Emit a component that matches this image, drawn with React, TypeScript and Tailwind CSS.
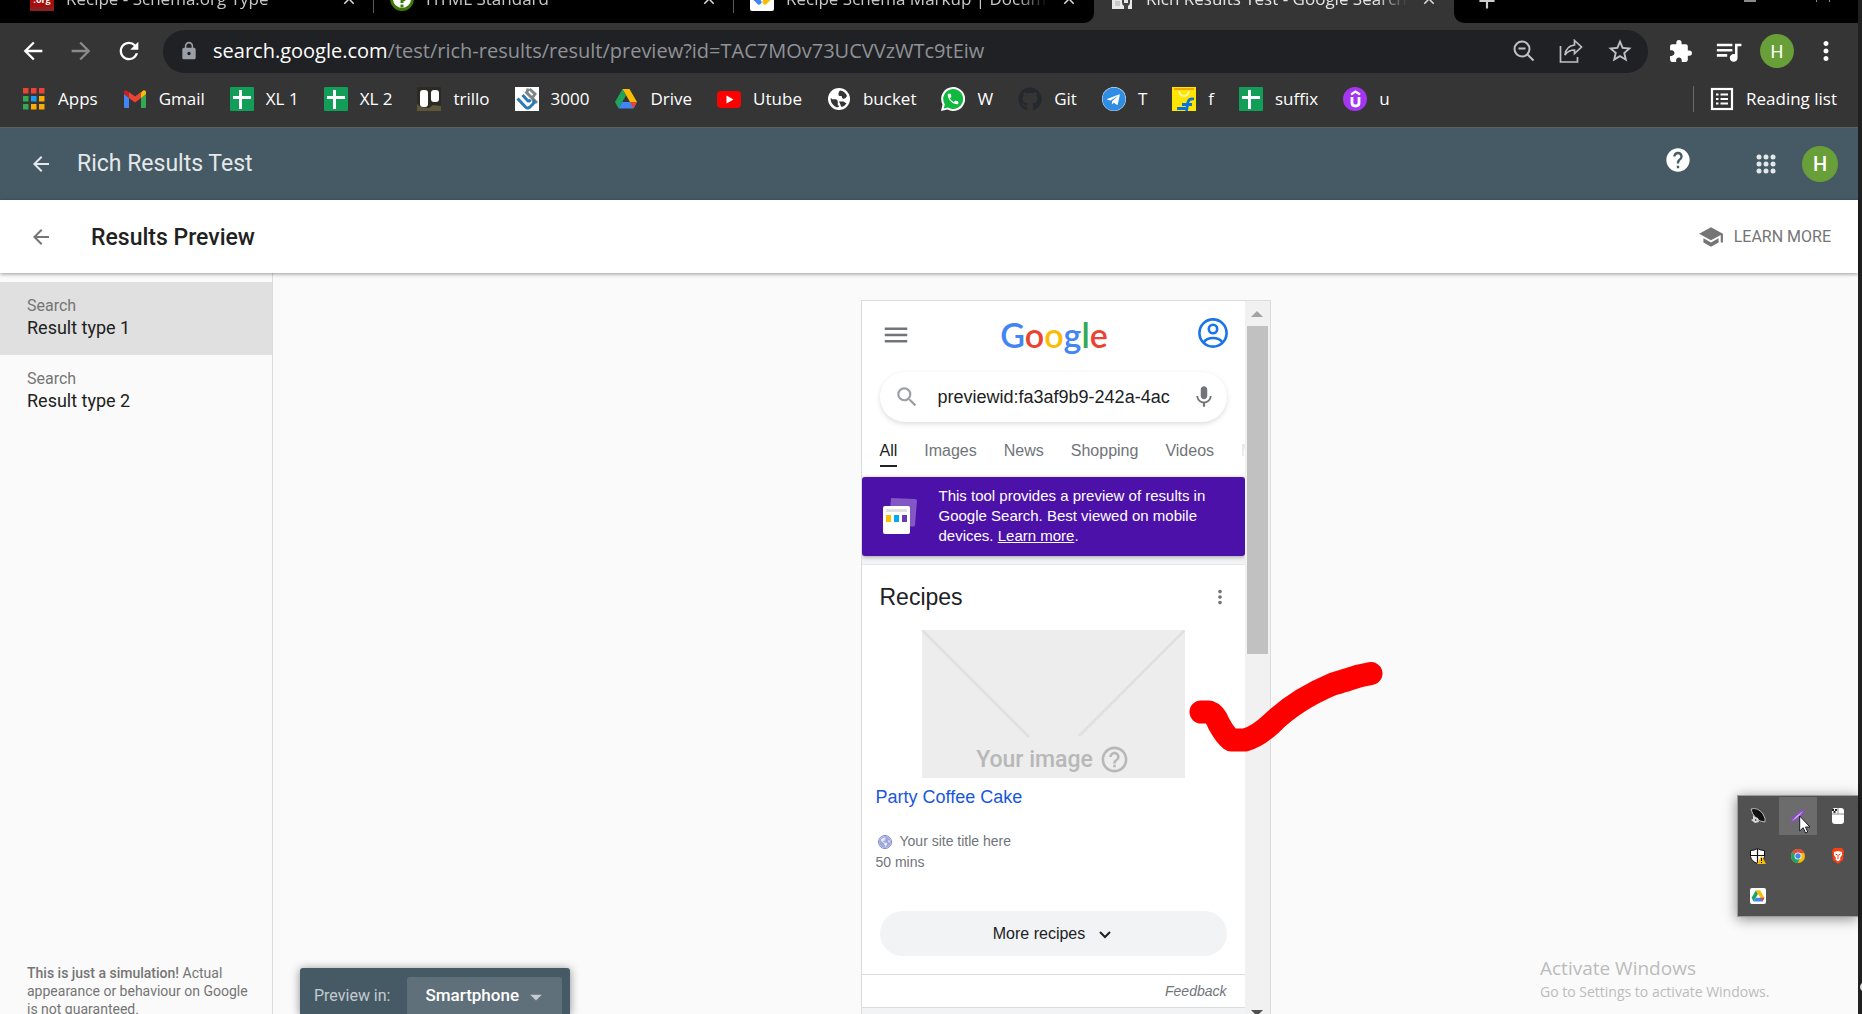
import React from "react";
import {
  MdArrowBack,
  MdArrowForward,
  MdRefresh,
  MdLock,
  MdExtension,
  MdQueueMusic,
  MdMoreVert,
  MdStarBorder,
  MdSchool,
  MdHelp,
  MdMenu,
  MdSearch,
  MdMic,
  MdClose,
  MdAdd,
  MdPhone,
  MdArrowDropDown,
  MdHelpOutline,
} from "react-icons/md";
import { FaGithub, FaTelegram, FaGlobeAmericas } from "react-icons/fa";

const UI = "font-['Open_Sans','Noto_Sans',sans-serif]";

function SchemaIcon() {
  return (
    <span className="flex h-6 w-6 flex-col justify-end bg-[#a60d0d]">
      <span className="h-3 text-center text-[9px] font-bold leading-none text-white">.org</span>
      <span className="h-1 bg-[#8c2020]" />
    </span>
  );
}

function HtmlIcon() {
  return (
    <svg viewBox="0 0 24 24" className="h-6 w-6">
      <circle cx="12" cy="12" r="10.5" fill="#fff" stroke="#3c790a" strokeWidth="3" />
      <path d="M8 9a4 4 0 1 1 5 4l-1 1v2" fill="none" stroke="#3c790a" strokeWidth="3" />
      <rect x="10.5" y="17.5" width="3" height="3" fill="#3c790a" />
    </svg>
  );
}

function DevelopersIcon() {
  return (
    <svg viewBox="0 0 24 24" className="h-6 w-6">
      <rect width="24" height="24" rx="2" fill="#fff" />
      <path d="M5 11l4 4" stroke="#4285f4" strokeWidth="5" strokeLinecap="round" />
      <path d="M19 11l-4 4" stroke="#fbbc04" strokeWidth="5" strokeLinecap="round" />
    </svg>
  );
}

function ToolIcon() {
  return (
    <svg viewBox="0 0 24 24" className="h-6 w-6">
      <path d="M2 2h20v20H2z" fill="#e8e8e8" />
      <path d="M5 14h5v5H5z" fill="#c9c9c9" />
      <path d="M12 12v4a4 4 0 0 0 2 3v3h4v-3a4 4 0 0 0 2-3v-4h-2v4h-4v-4z" fill="#444" />
    </svg>
  );
}

function AppsColorIcon() {
  const colors = ["#ea4335", "#ea4335", "#ea4335", "#34a853", "#1a9bf0", "#fbab05", "#34a853", "#fbab05", "#fbab05"];
  return (
    <svg viewBox="0 0 24 24" className="h-6 w-6">
      {colors.map((c, i) => (
        <rect key={i} x={1 + (i % 3) * 8} y={1 + Math.floor(i / 3) * 8} width="5.5" height="5.5" fill={c} />
      ))}
    </svg>
  );
}

function GmailIcon() {
  return (
    <svg viewBox="0 0 24 24" className="h-6 w-6">
      <path d="M1 20V7l5 3.5V21H2a1 1 0 0 1-1-1z" fill="#4285f4" />
      <path d="M23 20V7l-5 3.5V21h4a1 1 0 0 0 1-1z" fill="#34a853" />
      <path d="M18 5.500v5.500l5-4V5.500c0-2-2-3-3.500-1.500z" fill="#fbbc04" />
      <path d="M6 5.500v5.500L1 7V5.500C1 3.500 3 2.500 4.500 4z" fill="#c5221f" />
      <path d="M6 11V5l6 4.500L18 5v6l-6 4.500z" fill="#ea4335" />
    </svg>
  );
}

function SheetIcon() {
  return (
    <svg viewBox="0 0 24 24" className="h-6 w-6">
      <rect width="24" height="24" rx="1" fill="#129e59" />
      <path d="M10.500 3v19M3 10.500h18" stroke="#fff" strokeWidth="3" />
    </svg>
  );
}

function TrilloIcon() {
  return (
    <svg viewBox="0 0 24 24" className="h-6 w-6">
      <rect width="24" height="24" fill="#2b2a24" />
      <path d="M0 17l4 3 8 1 4-3 8 1v5H0z" fill="#5e5638" />
      <rect x="3" y="3" width="8" height="17" rx="3" fill="#fff" />
      <rect x="14" y="3" width="8" height="12" rx="3" fill="#fff" />
    </svg>
  );
}

function HashIcon() {
  return (
    <svg viewBox="0 0 24 24" className="h-6 w-6">
      <rect width="24" height="24" fill="#fff" />
      <g fill="none" strokeWidth="3">
        <path d="M10.500 4.500L22 16M13 1.500l-1 4M16.500 12l3.500-5-5.500-5" stroke="#7f8487" />
        <path d="M2.500 11.500l8 8.500q2 2 4.500 0l3-3q2-2 0-4" stroke="#2a7ab5" />
        <path d="M7.500 8l5 5.500q2 1.500 3-1" stroke="#2a7ab5" />
      </g>
    </svg>
  );
}

function DriveIcon({ className = "h-6 w-6" }: { className?: string }) {
  return (
    <svg viewBox="0 0 24 24" className={className}>
      <path d="M8.500 2L1 15l3.500 6.500L12 8.500z" fill="#1ea55b" />
      <path d="M8.500 2h7L23 15h-7z" fill="#fbbc04" />
      <path d="M8.200 15H23l-3.500 6.500h-15z" fill="#4285f4" />
      <path d="M16 15h7l-3.500 6.500z" fill="#ea4335" />
    </svg>
  );
}

function YoutubeIcon() {
  return (
    <svg viewBox="0 0 24 24" className="h-6 w-6">
      <rect y="4" width="24" height="17" rx="4" fill="#f00" />
      <path d="M9.500 8.500v8l7-4z" fill="#fff" />
    </svg>
  );
}

function BucketIcon() {
  return (
    <svg viewBox="0 0 24 24" className="h-6 w-6">
      <circle cx="12" cy="12" r="11" fill="#fff" />
      <path d="M3.500 11.500h5q3 0 3.500 3v5l-2 1Q4 18 3.500 11.500z" fill="#353535" />
      <path d="M5 11.500h4q2.500.500 2.500 3v4" fill="none" stroke="#fff" strokeWidth="1.500" />
      <path d="M13 3.500q5 .500 7 5.500-1.500 3.500-4.500 2.500l-1-2.500h-2.500q-1.500-3 1-5.500z" fill="#353535" />
      <path d="M12 14.500h4.500l3 2q-2 3-5 3.500z" fill="#353535" />
    </svg>
  );
}

function WhatsappBadge() {
  return (
    <svg viewBox="0 0 24 24" className="h-6 w-6">
      <path d="M12 0a12 12 0 1 1-5.500 22.600L0 24l1.500-6.500A12 12 0 0 1 12 0z" fill="#fff" />
      <path d="M12 2a10 10 0 1 1-5 18.600L2.800 21.500l1-4.200A10 10 0 0 1 12 2z" fill="#10b83e" />
      <MdPhone x="5" y="5" size={14} color="#fff" />
    </svg>
  );
}

function TelegramBadge() {
  return (
    <span className="flex h-6 w-6 items-center justify-center rounded-full bg-white text-[#2f8de4]">
      <FaTelegram size={24} />
    </span>
  );
}

function FlipkartIcon() {
  return (
    <svg viewBox="0 0 24 24" className="h-6 w-6">
      <rect width="24" height="24" fill="#ffe500" />
      <path d="M2 2h20" stroke="#f2a900" strokeWidth="2" />
      <path d="M7 4q1 5 5 5t5-5" fill="none" stroke="#fff4a0" strokeWidth="2" />
      <path d="M22 12q-5-1-6 3l-1.500 9M10 17.500h10M5 21.500h9" fill="none" stroke="#0a72dd" strokeWidth="2.800" />
    </svg>
  );
}

function UdemyIcon() {
  return (
    <svg viewBox="0 0 24 24" className="h-6 w-6">
      <circle cx="12" cy="12" r="12" fill="#a435f0" />
      <path d="M8 7.500l4.500-3 4.500 3" fill="none" stroke="#fff" strokeWidth="2.200" />
      <path d="M9 10v6q0 3 3.500 3t3.500-3v-6" fill="none" stroke="#fff" strokeWidth="2.800" />
    </svg>
  );
}

const bookmarks = [
  { label: "Apps", icon: <AppsColorIcon /> },
  { label: "Gmail", icon: <GmailIcon /> },
  { label: "XL 1", icon: <SheetIcon /> },
  { label: "XL 2", icon: <SheetIcon /> },
  { label: "trillo", icon: <TrilloIcon /> },
  { label: "3000", icon: <HashIcon /> },
  { label: "Drive", icon: <DriveIcon /> },
  { label: "Utube", icon: <YoutubeIcon /> },
  { label: "bucket", icon: <BucketIcon /> },
  { label: "W", icon: <WhatsappBadge /> },
  { label: "Git", icon: <FaGithub size={24} className="text-[#24292e]" /> },
  { label: "T", icon: <TelegramBadge /> },
  { label: "f", icon: <FlipkartIcon /> },
  { label: "suffix", icon: <SheetIcon /> },
  { label: "u", icon: <UdemyIcon /> },
];

function BrowserTab({ icon, title, active = false, divider = false }: { icon: React.ReactNode; title: string; active?: boolean; divider?: boolean }) {
  return (
    <div className="relative flex h-12 w-[360px] items-center gap-3 px-4 text-[17px] text-[#c8c8c8]">
      <span className="shrink-0">{icon}</span>
      <span
        className={
          "min-w-0 flex-1 overflow-hidden whitespace-nowrap [mask-image:linear-gradient(to_right,#000_88%,transparent)] " +
          (active ? "text-[#e4e4e4]" : "")
        }
      >
        {title}
      </span>
      <button aria-label={"Close " + title} className="shrink-0 text-[#dddddd]">
        <MdClose size={18} />
      </button>
      {divider && <span className="absolute right-0 bottom-2.5 h-7 w-px bg-[#5a5a5a]" />}
    </div>
  );
}

function TabStrip() {
  return (
    <div className="flex h-[23px] items-end overflow-hidden bg-[#353535]">
      <div className="flex rounded-br-[10px] bg-black pl-3.5">
        <BrowserTab icon={<SchemaIcon />} title="Recipe - Schema.org Type" divider />
        <BrowserTab icon={<HtmlIcon />} title="HTML Standard" divider />
        <BrowserTab icon={<DevelopersIcon />} title="Recipe Schema Markup  |  Documentation" />
      </div>
      <BrowserTab icon={<ToolIcon />} title="Rich Results Test - Google Search Console" active />
      <div className="flex h-12 flex-1 items-center rounded-bl-[10px] bg-black px-5 pt-1 text-[#cccccc]">
        <button aria-label="New tab">
          <MdAdd size={26} />
        </button>
        <div className="ml-auto flex items-center gap-[60px] pr-2">
          <span className="h-0.5 w-3 bg-[#8a8a8a]" />
          <span className="h-0.5 w-3.5 border-x border-[#8a8a8a]" />
        </div>
      </div>
    </div>
  );
}

function ZoomOutIcon() {
  return (
    <svg viewBox="0 0 24 24" className="h-6 w-6" fill="none" stroke="#bdc1c6" strokeWidth="2">
      <circle cx="10" cy="10" r="7.500" />
      <path d="M6.500 9.500h7M15.500 15.500l6 6" />
    </svg>
  );
}

function ShareIcon() {
  return (
    <svg viewBox="0 0 24 24" className="h-6 w-6" fill="none" stroke="#bdc1c6" strokeWidth="1.700">
      <path d="M1.500 7v16h17v-5" />
      <path d="M15.500 1.500L22.500 8l-7 6.500V11q-6 0-9.500 5 1-9 9.500-10z" />
    </svg>
  );
}

function AddressRow() {
  return (
    <div className="flex h-14 items-center gap-5 pr-4 pl-[19px] text-white">
      <button aria-label="Back" className="flex w-7 justify-center">
        <MdArrowBack size={28} />
      </button>
      <button aria-label="Forward" className="flex w-7 justify-center text-[#8a8a8a]">
        <MdArrowForward size={28} />
      </button>
      <button aria-label="Reload" className="flex w-7 justify-center">
        <MdRefresh size={30} />
      </button>
      <div className="flex h-[43px] min-w-0 flex-1 items-center rounded-full bg-[#202124] pr-3.5 pl-4">
        <MdLock size={20} className="mr-3.5 shrink-0 text-[#9aa0a6]" />
        <span className="min-w-0 flex-1 truncate text-[20px] text-[#8f9296]">
          <span className="text-white">search.google.com</span>
          /test/rich-results/result/preview?id=TAC7MOv73UCVVzWTc9tEiw
        </span>
        <div className="flex items-center gap-[23px] text-[#bdc1c6]">
          <button aria-label="Zoom">
            <ZoomOutIcon />
          </button>
          <button aria-label="Share">
            <ShareIcon />
          </button>
          <button aria-label="Bookmark">
            <MdStarBorder size={28} />
          </button>
        </div>
      </div>
      <div className="-ml-1 flex items-center gap-4">
        <button aria-label="Extensions" className="flex w-8 justify-center">
          <MdExtension size={25} />
        </button>
        <button aria-label="Media" className="flex w-8 justify-center">
          <MdQueueMusic size={31} />
        </button>
        <button aria-label="Profile" className="flex h-[34px] w-[34px] items-center justify-center rounded-full bg-[#689f38] text-[18px] font-['Roboto',sans-serif]">
          H
        </button>
        <button aria-label="Menu" className="flex w-8 justify-center">
          <MdMoreVert size={30} />
        </button>
      </div>
    </div>
  );
}

function BookmarksBar() {
  return (
    <nav className="flex h-[49px] items-center border-b border-[#5f5f5f] pr-[21px] pb-2 pl-[22px] text-[17px] text-white">
      <div className="flex items-center gap-[25px]">
        {bookmarks.map((b) => (
          <a key={b.label} href="#" className="flex items-center gap-3 whitespace-nowrap">
            {b.icon}
            {b.label}
          </a>
        ))}
      </div>
      <button className="ml-auto flex items-center gap-3 border-l border-[#6a6a6a] pl-4 whitespace-nowrap">
        <svg viewBox="0 0 24 24" className="h-6 w-6" fill="none" stroke="#fff" strokeWidth="2.200">
          <rect x="2" y="2" width="20" height="20" />
          <path d="M6 7.500h2.500M6 12h2.500M6 16.500h2.500M10.500 7.500H18M10.500 12H18M10.500 16.500H18" />
        </svg>
        Reading list
      </button>
    </nav>
  );
}

function DotGridIcon() {
  return (
    <svg viewBox="0 0 20 20" className="h-5 w-5" fill="currentColor">
      {[0, 1, 2, 3, 4, 5, 6, 7, 8].map((i) => (
        <circle key={i} cx={3 + (i % 3) * 7} cy={3 + Math.floor(i / 3) * 7} r="2.500" />
      ))}
    </svg>
  );
}

function PageHeader() {
  return (
    <header className="flex h-[72px] shrink-0 items-center bg-[#465a65] pr-5 pl-[29px] text-[#e4e8ea]">
      <button aria-label="Back">
        <MdArrowBack size={24} />
      </button>
      <h1 className="ml-6 text-[23px]">Rich Results Test</h1>
      <div className="ml-auto flex items-center">
        <button aria-label="Help" className="mr-16 pb-2 text-white">
          <MdHelp size={28} />
        </button>
        <button aria-label="Google apps">
          <DotGridIcon />
        </button>
        <button aria-label="Account" className="ml-[26px] flex h-9 w-9 items-center justify-center rounded-full bg-[#689f38] text-[20px] font-medium text-white">
          H
        </button>
      </div>
    </header>
  );
}

function SubHeader() {
  return (
    <div className="relative z-10 flex h-[73px] shrink-0 items-center bg-white pr-[27px] pl-[29px] shadow-[0_1px_4px_rgba(0,0,0,0.4)]">
      <button aria-label="Back to results" className="text-[#757575]">
        <MdArrowBack size={24} />
      </button>
      <h2 className="ml-[38px] pt-0.5 text-[23px] leading-8 font-medium text-[#212121]">Results Preview</h2>
      <a href="#" className="ml-auto flex items-center gap-2.5 text-[16px] text-[#757575]">
        <MdSchool size={26} />
        LEARN MORE
      </a>
    </div>
  );
}

function Sidebar() {
  return (
    <aside className="flex w-[273px] shrink-0 flex-col border-r border-[#dcdcdc] pt-[9px]">
      {[1, 2].map((n) => (
        <button key={n} className={"flex h-[73px] flex-col px-[27px] pt-3 text-left " + (n === 1 ? "bg-[#e0e0e0]" : "")}>
          <span className="text-[16px] leading-[23px] text-[#757575]">Search</span>
          <span className="text-[18px] leading-[22px] text-[#212121]">Result type {n}</span>
        </button>
      ))}
      <p className="mt-auto -mb-1 pr-5 pl-[27px] text-[14px] leading-[18px] text-[#757575]">
        <span className="font-medium">This is just a simulation!</span> Actual appearance or behaviour on Google is not guaranteed.
      </p>
    </aside>
  );
}

function GoogleLogo() {
  return (
    <span className="pb-1 font-['Lato',sans-serif] text-[34px] leading-10 font-semibold">
      <span className="text-[#4285f4]">G</span>
      <span className="text-[#ea4335]">o</span>
      <span className="text-[#fbbc05]">o</span>
      <span className="text-[#4285f4]">g</span>
      <span className="text-[#34a853]">l</span>
      <span className="text-[#ea4335]">e</span>
    </span>
  );
}

function AccountIcon() {
  return (
    <svg viewBox="0 0 30 30" className="h-[30px] w-[30px]" fill="none" stroke="#1a73e8" strokeWidth="2.600">
      <circle cx="15" cy="15" r="13.600" />
      <circle cx="15" cy="11" r="4.200" />
      <path d="M5.500 24.500q3-4.500 9.500-4.500t9.500 4.500" />
    </svg>
  );
}

function PreviewBanner() {
  return (
    <div className="flex h-[79px] items-center rounded-[3px] bg-[#4b11a8] pb-0.5 pl-5 text-white shadow-[0_1px_4px_rgba(0,0,0,0.35)]">
      <svg viewBox="0 0 36 38" className="h-[38px] w-9 shrink-0">
        <path d="M9 1l24 1q2 0 2 2l-2 24q0 2-3 1.500L7 27z" fill="#8458c4" />
        <rect x="1" y="9" width="27" height="28" rx="2" fill="#fff" />
        <rect x="4" y="12" width="21" height="3" fill="#e0e0e0" />
        <rect x="4" y="18" width="5" height="7" fill="#fbbc04" />
        <rect x="12" y="18" width="5" height="7" fill="#03a9f4" />
        <rect x="20" y="18" width="5" height="7" fill="#673ab7" />
      </svg>
      <p className="ml-[21px] w-[280px] text-[15px] leading-5">
        This tool provides a preview of results in Google Search. Best viewed on mobile devices.{" "}
        <a href="#" className="underline">
          Learn more
        </a>
        .
      </p>
    </div>
  );
}

function RecipeCard() {
  return (
    <section className="mt-2 border-t border-[#e6e8ea] bg-white">
      <div className="flex items-center justify-between pt-4 pr-3.5 pl-[18px]">
        <h3 className="text-[23px] leading-8 text-[#202124]">Recipes</h3>
        <button aria-label="More options" className="text-[#70757a]">
          <MdMoreVert size={22} />
        </button>
      </div>
      <div className="relative mx-[60px] mt-[17px] flex h-[148px] items-end justify-center bg-[#ededed]">
        <svg viewBox="0 0 263 148" className="absolute inset-0 h-full w-full" fill="none" stroke="#e0e0e0" strokeWidth="3">
          <path d="M0 0l107 107M263 0L157 106" />
        </svg>
        <span className="relative flex items-center gap-1.5 pb-[3px] text-[#b8b8b8]">
          <span className="font-['Roboto',sans-serif] text-[23px] leading-7 font-medium">Your image</span>
          <MdHelpOutline size={31} />
        </span>
      </div>
      <a href="#" className="mt-[7px] ml-3.5 inline-block text-[18px] leading-6 text-[#1a56db]">
        Party Coffee Cake
      </a>
      <div className="mt-[21px] px-3.5 text-[14px] leading-[21px] text-[#70757a]">
        <div className="flex items-center gap-2 pl-0.5">
          <span className="flex rounded-full border border-[#7986cb] bg-[#e8eaf6] text-[#9fa8da]">
            <FaGlobeAmericas size={12} />
          </span>
          Your site title here
        </div>
        <div>50 mins</div>
      </div>
      <div className="px-[18px] pt-[38px] pb-[18px]">
        <button className="flex h-[45px] w-full items-center justify-center gap-3 rounded-full bg-[#f1f3f4] text-[16px] text-[#202124]">
          More recipes
          <svg viewBox="0 0 16 16" className="h-4 w-4" fill="none" stroke="#202124" strokeWidth="2">
            <path d="M3 6l5 5 5-5" />
          </svg>
        </button>
      </div>
      <div className="flex h-[34px] items-center justify-end border-y border-[#dadce0] pr-[18px] text-[14px] text-[#70757a] italic">
        Feedback
      </div>
    </section>
  );
}

function PhonePreview() {
  return (
    <div className="mt-[27px] flex w-[410px] overflow-hidden border border-b-0 border-[#dadce0] bg-[#f1f3f4] font-['Liberation_Sans',Arial,sans-serif]">
      <div className="min-w-0 flex-1">
        <div className="bg-white">
          <div className="flex h-[71px] items-center justify-between pr-[17px] pl-[19px]">
            <button aria-label="Menu" className="flex w-[30px] justify-center pb-1 text-[#70757a]">
              <MdMenu size={30} />
            </button>
            <GoogleLogo />
            <button aria-label="Google account" className="pb-2">
              <AccountIcon />
            </button>
          </div>
          <div className="mx-[18px] flex h-[50px] items-center rounded-full bg-white pr-2.5 pl-3.5 shadow-[0_2px_5px_rgba(60,64,67,0.18)]">
            <MdSearch size={26} className="shrink-0 text-[#9aa0a6]" />
            <input
              aria-label="Search"
              defaultValue="previewid:fa3af9b9-242a-4ac"
              className="ml-[18px] min-w-0 flex-1 bg-transparent text-[18px] text-[#202124] outline-none"
            />
            <MdMic size={26} className="shrink-0 text-[#70757a]" />
          </div>
          <div className="flex h-[55px] gap-[27px] overflow-hidden pt-[17px] pl-[18px] text-[16px] leading-6 text-[#70757a]">
            <a href="#" className="h-7 border-b-2 border-[#202124] text-[#202124]">
              All
            </a>
            <a href="#">Images</a>
            <a href="#">News</a>
            <a href="#">Shopping</a>
            <a href="#">Videos</a>
            <a href="#" className="opacity-20">
              Maps
            </a>
          </div>
        </div>
        <PreviewBanner />
        <RecipeCard />
      </div>
      <div className="flex w-[25px] shrink-0 flex-col items-center bg-[#f1f1f1]">
        <div className="flex h-[25px] items-center">
          <span className="border-x-[6px] border-b-[6px] border-x-transparent border-b-[#a3a3a3]" />
        </div>
        <div className="h-[328px] w-[21px] bg-[#c1c1c1]" />
        <span className="mt-auto -mb-0.5 border-x-[6px] border-t-[6px] border-x-transparent border-t-[#505050]" />
      </div>
    </div>
  );
}

function DeviceBar() {
  return (
    <div className="absolute bottom-0 left-[27px] flex h-[46px] items-end rounded-t-[3px] bg-[#465a65] pr-2 pl-3.5 shadow-[0_1px_10px_rgba(0,0,0,0.45)]">
      <label htmlFor="device" className="flex h-[37px] items-center text-[16px] text-[#c3cbd0]">
        Preview in:
      </label>
      <div className="relative ml-[17px]">
        <select id="device" className="h-[37px] w-[155px] appearance-none rounded-t-[3px] bg-[#5f707a] pl-[18px] text-[17px] font-medium text-white">
          <option>Smartphone</option>
        </select>
        <MdArrowDropDown size={28} className="pointer-events-none absolute top-1.5 right-3 text-[#c3cbd0]" />
      </div>
    </div>
  );
}

function CheckMark() {
  return (
    <svg viewBox="0 0 194 90" className="absolute top-[389px] left-[328px] h-[90px] w-[194px]" fill="none" stroke="#f00" strokeWidth="23" strokeLinecap="round" strokeLinejoin="round">
      <path d="M12 50H20Q26 52 30 62Q36 73 42 78H56Q68 75 82 62Q106 38 144 22Q164 16 170 14L182 11.500" />
    </svg>
  );
}

function TrayFlyout() {
  const cell = "flex h-10 w-10 items-center justify-center";
  return (
    <div className="absolute right-0 bottom-[97px] z-20 w-[121px] border border-r-0 border-[#9c9c9c] bg-[#515151] shadow-[0_2px_12px_rgba(0,0,0,0.45)]">
      <div className="grid grid-cols-3">
        <span className={cell}>
          <svg viewBox="0 0 16 16" className="h-4 w-4">
            <path d="M1 1q7-2 12 5 3 5 2 8-5 0-9-4T1 1z" fill="#111" stroke="#ddd" strokeWidth=".8" />
            <path d="M3 7l2 2 3 1 1 4-4 1-4-3 2-1z" fill="#d8d8d8" />
            <path d="M5 11l2 1-2 1z" fill="#333" />
          </svg>
        </span>
        <span className={cell + " bg-[#6c6c6c] bg-clip-content p-px"}>
          <svg viewBox="0 0 16 16" className="h-4 w-4">
            <path d="M15 1q-7 2-9 6-4 1-6 8 5-1 9-5 5-3 6-9z" fill="#8e4fc4" />
            <path d="M2 13q5-6 11-10-4 6-11 10z" fill="#d9b4f2" />
          </svg>
        </span>
        <span className={cell}>
          <svg viewBox="0 0 16 16" className="h-4 w-4">
            <rect x="2" width="12" height="16" rx="3" fill="#fff" />
            <path d="M2 6h12M8 0v6" stroke="#888" />
            <path d="M2 1h2v2H2zM5 1h2v2H5zM3.500 3h2v2h-2z" fill="#222" />
          </svg>
        </span>
        <span className={cell}>
          <svg viewBox="0 0 16 16" className="h-4 w-4">
            <path d="M7.500.500q3 2 7 2v6q-1 5-7 7-6-2-7-7v-6q4 0 7-2z" fill="#fff" stroke="#111" />
            <path d="M7.500 1v14M1 7.500h13" stroke="#111" strokeWidth="1.200" />
            <path d="M11.500 7.500L16 16H7z" fill="#fbbc04" />
            <path d="M11.500 10v3M11.500 14v1" stroke="#111" />
          </svg>
        </span>
        <span className={cell}>
          <svg viewBox="0 0 16 16" className="h-4 w-4">
            <circle cx="8" cy="8" r="7" fill="#fbbc04" />
            <path d="M8 8L2 4.500A7 7 0 0 1 14.500 5H8z" fill="#dd4b3e" />
            <path d="M8 8L2 4.500A7 7 0 0 0 7.500 15l3-5z" fill="#1da462" />
            <circle cx="8" cy="8" r="3.500" fill="#fff" />
            <circle cx="8" cy="8" r="2.700" fill="#4285f4" />
          </svg>
        </span>
        <span className={cell}>
          <svg viewBox="0 0 16 16" className="h-4 w-4">
            <path d="M4 0h8l2 3-1 9-5 4-5-4-1-9z" fill="#fb3f14" />
            <path d="M4 4l4-1 4 1v3l-2 3 .500 1.500L8 13.500l-2.500-2L6 10 4 7z" fill="#fff" />
            <path d="M5.500 6l2 1M10.500 6l-2 1M7 10h2M8 7v2" stroke="#fb3f14" />
          </svg>
        </span>
        <span className={cell}>
          <span className="flex h-4 w-4 items-center justify-center rounded-[2px] bg-white">
            <DriveIcon className="h-3.5 w-3.5" />
          </span>
        </span>
      </div>
      <svg viewBox="0 0 12 19" className="absolute top-[19px] left-[61px] h-[19px] w-3">
        <path d="M.700 1v15l3.500-3.300 2.300 5.300 2.200-1-2.200-5H11z" fill="#fff" stroke="#1a1a2a" />
      </svg>
    </div>
  );
}

export default function App() {
  return (
    <div className="flex h-screen overflow-hidden bg-[#202020]">
      <div className="flex min-w-0 flex-1 flex-col bg-[#fafafa] font-['Roboto',sans-serif]">
        <div className={"shrink-0 bg-[#353535] " + UI}>
          <TabStrip />
          <AddressRow />
          <BookmarksBar />
        </div>
        <PageHeader />
        <SubHeader />
        <div className="relative flex min-h-0 flex-1">
          <Sidebar />
          <main className="relative flex min-w-0 flex-1 justify-center overflow-hidden">
            <div className="relative flex">
              <PhonePreview />
              <CheckMark />
            </div>
            <DeviceBar />
          </main>
          <TrayFlyout />
          <div className={"absolute right-[82px] bottom-3 w-[236px] whitespace-nowrap text-[#bcbcbc] " + UI}>
            <div className="text-[19px] leading-7">Activate Windows</div>
            <div className="text-[14px] leading-5">Go to Settings to activate Windows.</div>
          </div>
        </div>
      </div>
      <div className="flex w-1 shrink-0 flex-col justify-end overflow-hidden pb-[22px] pl-0.5">
        <span className="h-2.5 w-2.5 rounded-full bg-[#dddddd]" />
      </div>
    </div>
  );
}
